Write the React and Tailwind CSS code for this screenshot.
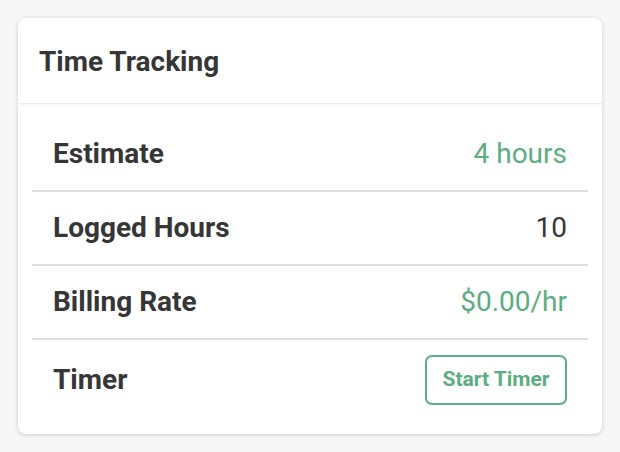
export default function App() {
  const rows = [
    { label: 'Estimate', value: '4 hours', green: true },
    { label: 'Logged Hours', value: '10', green: false },
    { label: 'Billing Rate', value: '$0.00/hr', green: true },
  ];

  return (
    <div className="min-h-[452px] w-[620px] bg-[#f7f7f7] p-[18px] font-['Roboto',sans-serif] text-[#363636]">
      <div className="overflow-hidden rounded-[8px] bg-white shadow-[0_1px_4px_rgba(0,0,0,0.18)]">
        {/* Header */}
        <div className="relative flex h-[86px] items-center border-b border-[#ededed] px-[21px] pt-[2px] shadow-[0_1px_3px_rgba(0,0,0,0.06)]">
          <h2 className="text-[28px] font-bold leading-[36px]">Time Tracking</h2>
        </div>

        {/* Body */}
        <div className="p-[14px]">
          {rows.map((row) => (
            <div
              key={row.label}
              className="flex items-center justify-between border-b-2 border-[#dedede] px-[21px] py-[18px] text-[28px] leading-[36px]"
            >
              <span className="font-bold">{row.label}</span>
              <span className={row.green ? 'text-[#5aae7f]' : 'text-[#363636]'}>{row.value}</span>
            </div>
          ))}
          <div className="flex items-center justify-between px-[21px] py-[15px]">
            <span className="text-[28px] font-bold leading-[36px]">Timer</span>
            <button className="flex h-[50px] w-[142px] items-center justify-center rounded-[7px] border-2 border-[#5aae7f] text-[21px] font-bold text-[#5aae7f]">
              Start Timer
            </button>
          </div>
        </div>
      </div>
    </div>
  );
}
